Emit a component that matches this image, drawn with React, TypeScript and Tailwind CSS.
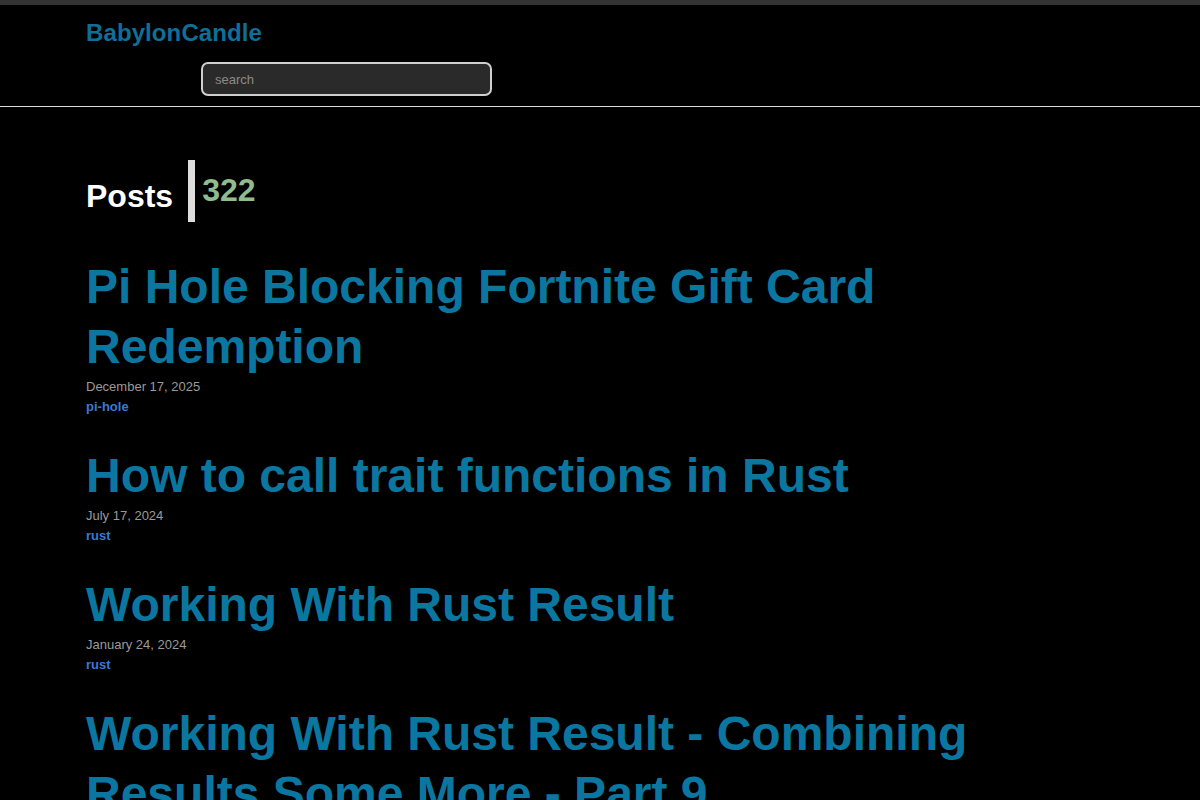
import { FC } from "react";

type TPost = {
  title: string;
  date: string;
  tag: string;
};

const posts: TPost[] = [
  { title: "Pi Hole Blocking Fortnite Gift Card Redemption", date: "December 17, 2025", tag: "pi-hole" },
  { title: "How to call trait functions in Rust", date: "July 17, 2024", tag: "rust" },
  { title: "Working With Rust Result", date: "January 24, 2024", tag: "rust" },
  {
    title: "Working With Rust Result - Combining Results Some More - Part 9",
    date: "January 23, 2024",
    tag: "rust",
  },
  { title: "Working With Rust Result - Part 8", date: "January 22, 2024", tag: "rust" },
];

const PostItem: FC<{ post: TPost }> = ({ post }) => (
  <article className="mb-[30px]">
    <h2 className="text-[48px] leading-[60px] font-bold text-[#0b77a1]">
      <a href="#">{post.title}</a>
    </h2>
    <div className="text-[13px] leading-[20px] text-[#9a9a9a]">{post.date}</div>
    <div className="text-[13px] leading-[19px] font-bold text-[#3a79d6]">
      <a href="#">{post.tag}</a>
    </div>
  </article>
);

export default function App() {
  return (
    <div className="min-h-screen bg-black font-['Liberation_Sans',Arial,sans-serif]">
      <div className="h-[5px] bg-[#333333]" />
      <header className="border-b border-[#dddddd]">
        <div className="px-[86px] pt-[14px] pb-[10px]">
          <a href="#" className="block text-[24px] leading-[28px] font-bold tracking-[0.1px] text-[#0f6f98]">
            BabylonCandle
          </a>
          <input
            type="text"
            placeholder="search"
            className="mt-[15px] ml-[115px] block w-[291px] h-[34px] rounded-[7px] border-2 border-[#cfcfcf] bg-[#2a2a2a] px-3 text-[13px] text-[#dddddd] placeholder:text-[#8a8a8a] outline-none"
          />
        </div>
      </header>

      <main className="px-[86px] pt-[53px]">
        <div className="flex items-start mb-[35px]">
          <h1 className="mt-[18px] text-[32px] leading-[37px] font-bold text-white">Posts</h1>
          <div className="ml-[15px] w-[7px] h-[62px] bg-[#dddddd]" />
          <span className="mt-[12px] ml-[7px] text-[32px] leading-[37px] font-bold text-[#8fbc8f]">322</span>
        </div>

        {posts.map((post) => (
          <PostItem key={post.title} post={post} />
        ))}
      </main>
    </div>
  );
}
